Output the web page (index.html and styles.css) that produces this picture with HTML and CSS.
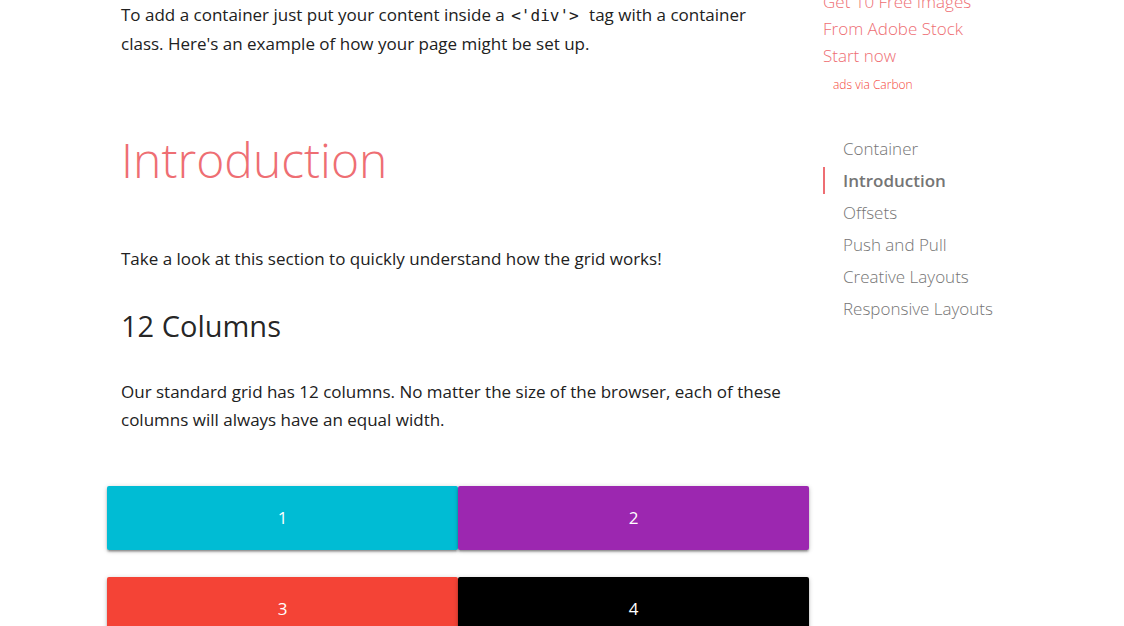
FILE: index.html
```html
<!DOCTYPE html>
<html lang="en">
<head>
<meta charset="utf-8">
<meta name="viewport" content="width=device-width, initial-scale=1">
<title>Grid</title>
<link rel="stylesheet" href="styles.css">
</head>
<body>
<div class="page">
  <main class="content">
    <p class="text lead">To add a container just put your content inside a <code class="code">&lt;'div'&gt;</code> tag with a container class. Here's an example of how your page might be set up.</p>
    <section id="introduction">
      <h2 class="title">Introduction</h2>
      <p class="text">Take a look at this section to quickly understand how the grid works!</p>
      <h4 class="subtitle">12 Columns</h4>
      <p class="text">Our standard grid has 12 columns. No matter the size of the browser, each of these columns will always have an equal width.</p>
      <div class="grid">
        <div class="panel cyan">1</div>
        <div class="panel purple">2</div>
        <div class="panel red">3</div>
        <div class="panel black">4</div>
      </div>
    </section>
  </main>
  <aside class="sidebar">
    <a class="ad" href="#">Get 10 Free Images<br>From Adobe Stock<br>Start now</a>
    <a class="ad-source" href="#">ads via Carbon</a>
    <nav class="toc" aria-label="Contents">
      <a class="toc-link" href="#">Container</a>
      <a class="toc-link active" href="#introduction">Introduction</a>
      <a class="toc-link" href="#">Offsets</a>
      <a class="toc-link" href="#">Push and Pull</a>
      <a class="toc-link" href="#">Creative Layouts</a>
      <a class="toc-link" href="#">Responsive Layouts</a>
    </nav>
  </aside>
</div>
</body>
</html>
```

FILE: styles.css
```css
* {
  box-sizing: border-box;
}

html {
  overflow: hidden;
}

body {
  margin: 0;
  background: #fff;
  color: rgba(0, 0, 0, 0.87);
  font-family: "Open Sans", "Noto Sans", sans-serif;
  font-size: 17px;
  line-height: 28px;
}

.page {
  display: grid;
  grid-template-columns: 3fr 1fr;
  padding: 0 81px 0 107px;
}

.content {
  padding: 0 14px;
}

.text {
  margin: 0;
  color: #212121;
}

.lead {
  padding-right: 28px;
  line-height: 29px;
}

.code {
  margin: 0 6px 0 2px;
  font-family: "DejaVu Sans Mono", monospace;
  font-size: 16px;
  line-height: 1;
}

.title {
  margin: 71px 0 54px;
  color: #ee6e73;
  font-size: 48px;
  font-weight: 300;
  line-height: 62px;
}

.subtitle {
  margin: 35px 0 34px;
  font-size: 29px;
  font-weight: 400;
  line-height: 36px;
}

.grid {
  display: grid;
  grid-template-columns: 1fr 1fr;
  row-gap: 27px;
  margin: 52px -14px 0;
}

.panel {
  padding: 18px 0;
  border-radius: 2px;
  box-shadow: 0 2px 2px 0 rgba(0, 0, 0, 0.24), 0 3px 1px -2px rgba(0, 0, 0, 0.12), 0 1px 5px 0 rgba(0, 0, 0, 0.2);
  color: #fff;
  text-align: center;
}

.cyan {
  background: #00bcd4;
}

.purple {
  background: #9c27b0;
}

.red {
  background: #f44336;
}

.black {
  background: #000;
}

.sidebar {
  margin-top: -12px;
  padding-left: 14px;
  font-weight: 300;
}

.ad {
  display: block;
  color: #ee6e73;
  line-height: 27px;
  text-decoration: none;
}

.ad-source {
  display: block;
  padding: 6px 10px 4px;
  color: #f44336;
  font-size: 12px;
  line-height: 20px;
  text-decoration: none;
}

.toc {
  display: grid;
  row-gap: 5px;
  margin-top: 36px;
}

.toc-link {
  padding-left: 20px;
  color: #757575;
  line-height: 27px;
  text-decoration: none;
}

.active {
  padding-left: 18px;
  border-left: 2px solid #ee6e73;
  font-weight: 600;
}
```
